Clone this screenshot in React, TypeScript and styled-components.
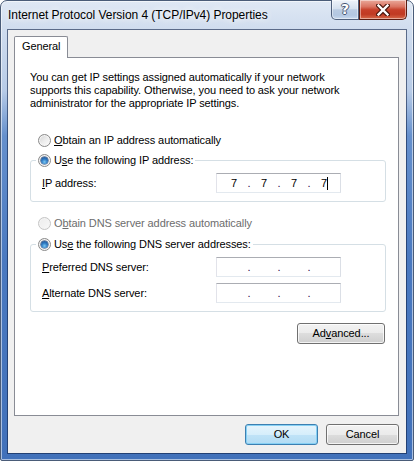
import React from 'react';
import styled, { createGlobalStyle } from 'styled-components';

const GlobalStyle = createGlobalStyle`
  html, body { margin: 0; padding: 0; background: #ffffff; }
  body { font-family: "Liberation Sans", Arial, sans-serif; letter-spacing: -0.1px; }
  *, *::before, *::after { box-sizing: border-box; }
`;

const Window = styled.div`
  width: 414px;
  height: 461px;
  display: flex;
  flex-direction: column;
  border: 1px solid #4a5c78;
  border-radius: 7px 7px 2px 2px;
  padding: 0 6px 6px 6px;
  background: linear-gradient(
    180deg,
    #dfe8f4 0px,
    #cfdcee 30px,
    #b7cbe7 90px,
    #6590cd 135px,
    #4a79c0 260px,
    #4171ba 100%
  );
  box-shadow: inset 0 0 0 1px rgba(255, 255, 255, 0.55);
`;

const TitleBar = styled.div`
  height: 28px;
  display: flex;
  justify-content: space-between;
  align-items: flex-start;
  flex-shrink: 0;
`;

const Title = styled.div`
  padding: 6px 0 0 1px;
  font-size: 12px;
  line-height: 16px;
  letter-spacing: -0.05px;
  color: #000;
  white-space: nowrap;
  text-shadow: 0 0 6px rgba(255, 255, 255, 0.95), 0 0 10px rgba(255, 255, 255, 0.8);
`;

const CaptionGroup = styled.div`
  display: flex;
  margin-top: -1px;
  height: 20px;
`;

const CaptionButton = styled.div<{ $kind: 'help' | 'close' }>`
  height: 20px;
  width: ${(p) => (p.$kind === 'close' ? 48 : 28)}px;
  display: flex;
  align-items: center;
  justify-content: center;
  border: 1px solid ${(p) => (p.$kind === 'close' ? '#5a1c12' : '#4f607c')};
  border-top: none;
  border-radius: ${(p) => (p.$kind === 'close' ? '0 0 5px 0' : '0 0 0 5px')};
  background: ${(p) =>
    p.$kind === 'close'
      ? 'linear-gradient(180deg, #eaa99b 0%, #da7462 35%, #c63f29 52%, #c03a23 75%, #d66a4b 100%)'
      : 'linear-gradient(180deg, #eef3fa 0%, #d6e1ef 45%, #b9cbe2 52%, #b3c7e1 80%, #c9daee 100%)'};
  box-shadow: inset 0 0 0 1px rgba(255, 255, 255, 0.45);
`;

const HelpGlyph = styled.span`
  font-family: "DejaVu Sans", sans-serif;
  font-weight: bold;
  font-size: 14px;
  line-height: 14px;
  color: #ffffff;
  margin-top: -1px;
  text-shadow: 1px 0 0 #475874, -1px 0 0 #475874, 0 1px 0 #475874, 0 -1px 0 #475874;
`;

const Client = styled.div`
  flex: 1;
  display: flex;
  flex-direction: column;
  border: 1px solid rgba(14, 32, 70, 0.6);
  background: #f0f0f0;
  background-clip: padding-box;
  padding: 6px 7px 8px 6px;
`;

const TabStrip = styled.div`
  display: flex;
`;

const Tab = styled.div`
  position: relative;
  z-index: 1;
  width: 54px;
  height: 22px;
  margin-bottom: -1px;
  padding: 3px 0 0 7px;
  border: 1px solid #898c95;
  border-bottom: none;
  border-radius: 2px 2px 0 0;
  background: #ffffff;
  font-size: 11px;
  line-height: 13px;
  color: #000;
`;

const Panel = styled.div`
  height: 359px;
  display: flex;
  flex-direction: column;
  border: 1px solid #898c95;
  background: #ffffff;
  padding: 13px 12px 0 15px;
`;

const Description = styled.p`
  margin: 0;
  font-size: 11px;
  line-height: 13px;
  color: #000;
  white-space: nowrap;
`;

const RadioRow = styled.div<{ $top?: number; $indent?: number; $disabled?: boolean }>`
  display: flex;
  align-items: center;
  gap: 3px;
  height: 14px;
  margin-top: ${(p) => p.$top ?? 0}px;
  padding-left: ${(p) => p.$indent ?? 0}px;
  font-size: 11px;
  line-height: 14px;
  white-space: nowrap;
  color: ${(p) => (p.$disabled ? '#6d6d6d' : '#000')};
`;

const Radio = styled.span<{ $checked?: boolean; $disabled?: boolean }>`
  position: relative;
  flex-shrink: 0;
  width: 13px;
  height: 13px;
  border-radius: 50%;
  border: 1px solid ${(p) => (p.$disabled ? '#c5c5c5' : '#8a8a8a')};
  background: ${(p) =>
    p.$disabled
      ? 'linear-gradient(135deg, #ececec 0%, #f8f8f8 100%)'
      : 'linear-gradient(135deg, #d2d2d2 0%, #ececec 50%, #fdfdfd 100%)'};
  box-shadow: inset 0 0 0 1px ${(p) => (p.$disabled ? '#f4f4f4' : '#f6f6f6')};

  &::after {
    content: '';
    display: ${(p) => (p.$checked ? 'block' : 'none')};
    position: absolute;
    left: 2px;
    top: 2px;
    width: 7px;
    height: 7px;
    border-radius: 50%;
    background: radial-gradient(circle at 50% 70%, #7cc8f2 0%, #2f7bc4 45%, #1a4786 100%);
    box-shadow: 0 0 0 0.5px #1d3f70;
  }
`;

const Key = styled.span`
  text-decoration: underline;
  text-underline-offset: 1px;
`;

const Group = styled.fieldset<{ $top: number }>`
  margin: ${(p) => p.$top}px 0 0 0;
  padding: 0;
  width: 356px;
  min-width: 0;
  border: 1px solid #d5dfe5;
  border-radius: 3px;
`;

const GroupLegend = styled.legend`
  margin-left: 5px;
  padding: 0 2px;
  height: 14px;
`;

const GroupBody = styled.div`
  display: flex;
  flex-direction: column;
  gap: 6px;
  padding: 6px 0 8px 11px;
`;

const FieldRow = styled.div`
  display: flex;
  align-items: center;
  height: 20px;
`;

const FieldLabel = styled.span`
  width: 174px;
  flex-shrink: 0;
  font-size: 11px;
  line-height: 13px;
  color: #000;
`;

const IpBox = styled.div`
  width: 125px;
  height: 20px;
  display: flex;
  align-items: center;
  padding-left: 5px;
  border: 1px solid;
  border-color: #abadb3 #dbdfe6 #e3e9ef #e2e3ea;
  background: #ffffff;
  font-size: 11px;
  line-height: 13px;
  color: #000;
`;

const Segment = styled.span`
  width: 24px;
  text-align: center;
`;

const Dot = styled.span`
  width: 6px;
  text-align: center;
  color: #2a0a44;
`;

const Caret = styled.span`
  display: inline-block;
  width: 1px;
  height: 13px;
  margin-right: -1px;
  background: #000;
  vertical-align: -3px;
`;

const PanelActions = styled.div`
  display: flex;
  justify-content: flex-end;
  width: 356px;
  margin-top: 11px;
  padding-right: 1px;
`;

const Button = styled.button<{ $width: number; $default?: boolean }>`
  width: ${(p) => p.$width}px;
  height: 21px;
  padding: 0;
  font-family: "Liberation Sans", Arial, sans-serif;
  font-size: 11px;
  line-height: 13px;
  letter-spacing: -0.1px;
  color: #000;
  border: 1px solid ${(p) => (p.$default ? '#3c7fb1' : '#707070')};
  border-radius: 3px;
  background: ${(p) =>
    p.$default
      ? 'linear-gradient(180deg, #e6f4fc 0%, #d6eefb 50%, #c0e3f7 50%, #b2dcf4 100%)'
      : 'linear-gradient(180deg, #f2f2f2 0%, #ebebeb 50%, #dddddd 50%, #cfcfcf 100%)'};
  box-shadow: inset 0 0 0 1px ${(p) => (p.$default ? '#86d0f4' : 'rgba(255,255,255,0.75)')};
`;

const Footer = styled.div`
  display: flex;
  justify-content: flex-end;
  gap: 8px;
  margin-top: 8px;
`;

const CloseIcon = () => (
  <svg width="14" height="12" viewBox="0 0 14 12" style={{ display: 'block' }}>
    <path d="M2.5 1.5 L11.5 10.5 M11.5 1.5 L2.5 10.5" stroke="#4a160d" strokeWidth="4.6" strokeLinecap="square" fill="none" />
    <path d="M2.5 1.5 L11.5 10.5 M11.5 1.5 L2.5 10.5" stroke="#ffffff" strokeWidth="2.4" strokeLinecap="square" fill="none" />
  </svg>
);

const IpInput = ({ values, caret }: { values: string[]; caret?: boolean }) => (
  <IpBox>
    {values.map((v, i) => (
      <React.Fragment key={i}>
        <Segment>
          {v}
          {caret && i === values.length - 1 ? <Caret /> : null}
        </Segment>
        {i < values.length - 1 ? <Dot>.</Dot> : null}
      </React.Fragment>
    ))}
  </IpBox>
);

export default function App() {
  return (
    <>
      <GlobalStyle />
      <Window>
        <TitleBar>
          <Title>Internet Protocol Version 4 (TCP/IPv4) Properties</Title>
          <CaptionGroup>
            <CaptionButton $kind="help">
              <HelpGlyph>?</HelpGlyph>
            </CaptionButton>
            <CaptionButton $kind="close">
              <CloseIcon />
            </CaptionButton>
          </CaptionGroup>
        </TitleBar>
        <Client>
          <TabStrip>
            <Tab>General</Tab>
          </TabStrip>
          <Panel>
            <Description>
              You can get IP settings assigned automatically if your network
              <br />
              supports this capability. Otherwise, you need to ask your network
              <br />
              administrator for the appropriate IP settings.
            </Description>

            <RadioRow $top={23} $indent={8}>
              <Radio />
              <span>
                <Key>O</Key>btain an IP address automatically
              </span>
            </RadioRow>

            <Group $top={6}>
              <GroupLegend>
                <RadioRow>
                  <Radio $checked />
                  <span>
                    U<Key>s</Key>e the following IP address:
                  </span>
                </RadioRow>
              </GroupLegend>
              <GroupBody>
                <FieldRow>
                  <FieldLabel>
                    <Key>I</Key>P address:
                  </FieldLabel>
                  <IpInput values={['7', '7', '7', '7']} caret />
                </FieldRow>
              </GroupBody>
            </Group>

            <RadioRow $top={14} $indent={8} $disabled>
              <Radio $disabled />
              <span>
                O<Key>b</Key>tain DNS server address automatically
              </span>
            </RadioRow>

            <Group $top={7}>
              <GroupLegend>
                <RadioRow>
                  <Radio $checked />
                  <span>
                    Us<Key>e</Key> the following DNS server addresses:
                  </span>
                </RadioRow>
              </GroupLegend>
              <GroupBody>
                <FieldRow>
                  <FieldLabel>
                    <Key>P</Key>referred DNS server:
                  </FieldLabel>
                  <IpInput values={['', '', '', '']} />
                </FieldRow>
                <FieldRow>
                  <FieldLabel>
                    <Key>A</Key>lternate DNS server:
                  </FieldLabel>
                  <IpInput values={['', '', '', '']} />
                </FieldRow>
              </GroupBody>
            </Group>

            <PanelActions>
              <Button $width={88}>
                Ad<Key>v</Key>anced...
              </Button>
            </PanelActions>
          </Panel>
          <Footer>
            <Button $width={73} $default>
              OK
            </Button>
            <Button $width={73}>Cancel</Button>
          </Footer>
        </Client>
      </Window>
    </>
  );
}
